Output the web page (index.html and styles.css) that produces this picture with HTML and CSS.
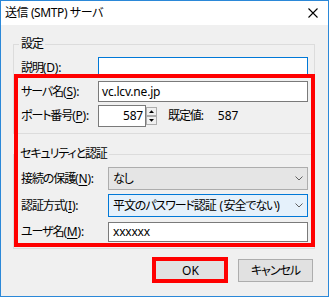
FILE: index.html
```html
<!DOCTYPE html>
<html lang="ja">
<head>
<meta charset="utf-8">
<link rel="stylesheet" href="styles.css">
</head>
<body>
<div class="window">
  <div class="titlebar">
    <span class="title">送信 (SMTP) サーバ</span>
    <svg class="close" width="10" height="10" viewBox="0 0 10 10"><path d="M0.5 0.5 L9.5 9.5 M9.5 0.5 L0.5 9.5" stroke="#000" stroke-width="1.1" fill="none"/></svg>
  </div>
  <div class="body">
    <fieldset class="group">
      <legend>設定</legend>
      <div class="rows rows1">
        <div class="row r21"><span class="lbl l1">説明<span class="ak">(<u>D</u>):</span></span><div class="textbox focus w210"></div></div>
        <div class="row r21"><span class="lbl l1">サーバ名<span class="ak">(<u>S</u>):</span></span><div class="textbox w211 pl3">vc.lcv.ne.jp</div></div>
        <div class="row r22"><span class="lbl l1">ポート番号<span class="ak">(<u>P</u>):</span></span><div class="textbox num">587</div>
          <svg class="spin" width="11" height="18" viewBox="0 0 11 18">
            <rect x="0.5" y="0.5" width="10" height="8" fill="#f0f0f0" stroke="#adadad"/>
            <rect x="0.5" y="9.5" width="10" height="8" fill="#f0f0f0" stroke="#adadad"/>
            <polygon points="3,6 8,6 5.5,3.2" fill="#000"/>
            <polygon points="3,12 8,12 5.5,14.8" fill="#000"/>
          </svg>
          <span class="deflbl">既定値:</span><span class="defval">587</span>
        </div>
      </div>
    </fieldset>
    <fieldset class="group g2">
      <legend>セキュリティと認証</legend>
      <div class="rows rows2">
        <div class="row r23"><span class="lbl l2">接続の保護<span class="ak">(<u>N</u>):</span></span>
          <div class="combo">なし<svg class="chev" width="8" height="5" viewBox="0 0 8 5"><path d="M0.5 0.5 L4 4 L7.5 0.5" stroke="#606060" fill="none"/></svg></div>
        </div>
        <div class="row r23"><span class="lbl l2">認証方式<span class="ak">(<u>I</u>):</span></span>
          <div class="combo hover"><span>平文のパスワード認証<span class="ak sp"> (</span>安全でない<span class="ak">)</span></span><svg class="chev" width="8" height="5" viewBox="0 0 8 5"><path d="M0.5 0.5 L4 4 L7.5 0.5" stroke="#606060" fill="none"/></svg></div>
        </div>
        <div class="row r20"><span class="lbl l2">ユーザ名<span class="ak">(<u>M</u>):</span></span><div class="textbox w200 pl5">xxxxxx</div></div>
      </div>
    </fieldset>
    <div class="buttons">
      <button class="btn default">OK</button>
      <button class="btn">キャンセル</button>
    </div>
  </div>
  <div class="mark mark1"></div>
  <div class="mark mark2"></div>
</div>
</body>
</html>
```

FILE: styles.css
```css
* { box-sizing: border-box; }
html, body { margin: 0; padding: 0; background: #f0f0f0; }
body {
  font-family: "Noto Sans", "Noto Sans CJK JP", sans-serif;
  font-size: 12px;
  color: #000;
  font-feature-settings: "palt";
  letter-spacing: -1.1px;
}
.ak { letter-spacing: -0.2px; }
.sp { letter-spacing: 0.6px; }
.window {
  position: relative;
  width: 329px;
  height: 297px;
  border: 1px solid #2b88d8;
  background: #f0f0f0;
  display: flex;
  flex-direction: column;
}
.titlebar {
  height: 24px;
  background: #fff;
  display: flex;
  align-items: center;
  justify-content: space-between;
  padding: 0 10px 0 4px;
  line-height: 16px;
}
.title { letter-spacing: -0.4px; }
.close { display: block; }
.body {
  flex: 1;
  padding: 11px 13px 0 12px;
}
.group {
  margin: 0;
  border: 1px solid #dcdcdc;
  padding: 0 6px 6px 7px;
  min-width: 0;
}
.group legend {
  padding: 0 2px;
  margin-left: -2px;
  line-height: 16px;
  height: 16px;
}
.g2 { margin-top: 12px; }
.g2 legend { margin-left: -3px; }
.rows {
  display: flex;
  flex-direction: column;
  padding-top: 5px;
}
.rows1 { gap: 3px; }
.rows2 { gap: 4px; }
.rows2 .r20 { margin-top: 1px; }
.row {
  display: flex;
  align-items: center;
  line-height: 16px;
}
.r20 { height: 20px; }
.r21 { height: 21px; }
.r22 { height: 22px; }
.r23 { height: 23px; }
.lbl { flex: none; white-space: nowrap; }
.l1 { width: 77px; }
.l2 { width: 87px; }
.lbl u { text-underline-offset: 2px; }
.textbox {
  height: 100%;
  background: #fff;
  border: 1px solid #7a7a7a;
  display: flex;
  align-items: center;
  padding: 0 2px;
  white-space: nowrap;
  letter-spacing: -0.2px;
}
.textbox.focus { border-color: #0078d7; }
.w210 { width: 210px; }
.w211 { width: 211px; }
.w200 { width: 200px; }
.pl3 { padding-left: 3px; }
.pl5 { padding-left: 4px; }
.num { width: 48px; justify-content: flex-end; }
.spin { display: block; flex: none; }
.deflbl { margin-left: 11px; }
.defval { margin-left: 15px; letter-spacing: 0; }
.combo {
  width: 200px;
  height: 100%;
  border: 1px solid #adadad;
  background: #e5e5e5;
  display: flex;
  align-items: center;
  justify-content: space-between;
  padding: 0 4px 0 4px;
  white-space: nowrap;
}
.combo.hover { border-color: #0078d7; background: #e5f1fb; }
.chev { display: block; flex: none; }
.buttons {
  display: flex;
  justify-content: flex-end;
  gap: 10px;
  margin-top: 10px;
  margin-right: 2px;
}
.btn {
  width: 75px;
  height: 23px;
  border: 1px solid #adadad;
  background: #e1e1e1;
  font: inherit;
  letter-spacing: -1px;
  color: #000;
  padding: 0;
  line-height: 16px;
}
.btn.default { border-color: #0078d7; letter-spacing: 0; }
.mark {
  position: absolute;
  border: 4px solid #ff0000;
  pointer-events: none;
}
.mark1 { left: 13px; top: 73px; width: 301px; height: 173px; }
.mark2 { left: 151px; top: 256px; width: 76px; height: 26px; }
```
